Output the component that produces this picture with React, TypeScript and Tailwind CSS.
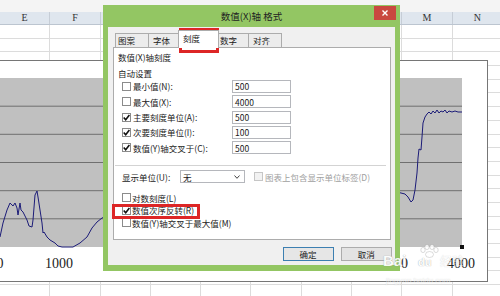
import React from "react";

const cols = ["E", "F", "", "", "", "", "", "", "M", "N"];

function Check({ checked, disabled }: { checked?: boolean; disabled?: boolean }) {
  return (
    <span
      className={`flex h-[9px] w-[9px] shrink-0 items-center justify-center border ${
        disabled ? "border-[#c6c6c6] bg-[#f2f2f2]" : "border-[#8b8b8b] bg-white"
      }`}
    >
      {checked && (
        <svg width="7" height="7" viewBox="0 0 7 7">
          <path d="M0.7 3.5 L2.7 5.7 L6.4 1.0" fill="none" stroke="#111" strokeWidth="1.6" />
        </svg>
      )}
    </span>
  );
}

const scaleRows = [
  { label: "最小值(N):", value: "500", checked: false },
  { label: "最大值(X):", value: "4000", checked: false },
  { label: "主要刻度单位(A):", value: "500", checked: true },
  { label: "次要刻度单位(I):", value: "100", checked: true },
  { label: "数值(Y)轴交叉于(C):", value: "500", checked: true },
];

const tabs = [
  { label: "图案", w: "w-[34px]", pl: "pl-[2px]" },
  { label: "字体", w: "w-[31px]", pl: "pl-[4px]" },
  { label: "刻度", w: "w-[41px]", pl: "pl-[4px]", active: true },
  { label: "数字", w: "w-[31px]", pl: "pl-[1px]" },
  { label: "对齐", w: "w-[34px]", pl: "pl-[4px]" },
];

const leftLine =
  "-12,246 -6,243 0,237 3,223 7,210 10,203 13,206 15,203 17,208 18,215 20,203 21,210 23,212 27,220 29,226 32,227 33,220 35,195 37,191 38,197 40,210 42,223 43,233 44,232 47,237 50,240 55,243 58,246 62,247 73,247 80,243 87,237 92,228 97,222 102,218 112,214";
const rightLine =
  "392,191 401,193 405,194 408,197 411,202 413,200 415,190 417,173 418,158 419,149 421,150 422,137 423,123 425,117 427,114 429,112 431,114 433,111 435,113 437,110 439,113 441,111 443,112 445,110 447,113 449,111 452,112 455,111 458,112 462,112";

export default function App() {
  const gridY = [106.2, 134.3, 162.5, 190.7, 218.8];
  return (
    <div className="relative h-[296px] w-[500px] overflow-hidden bg-white font-['Noto_Sans_CJK_SC','Noto_Sans',sans-serif]">
      {/* spreadsheet background */}
      <div className="flex flex-col">
        <div className="h-[12px] bg-[#f4f4f4]" />
        <div className="grid h-[13px] grid-cols-[repeat(10,50.3px)] border-b border-[#bcc5d0] bg-[#dfe6ee]">
          {cols.map((c, i) => (
            <div
              key={i}
              className="flex items-center justify-center border-r border-[#c6cdd6] font-['Liberation_Serif',serif] text-[10px] leading-none text-[#333]"
            >
              {c}
            </div>
          ))}
        </div>
        {Array.from({ length: 20 }).map((_, r) => (
          <div key={r} className="grid h-[13.7px] grid-cols-[repeat(10,50.3px)] border-b border-[#dcdcdc]">
            {cols.map((_, i) => (
              <div key={i} className="border-r border-[#dcdcdc]" />
            ))}
          </div>
        ))}
      </div>

      {/* chart object */}
      <div className="absolute left-[-10px] top-[60px] h-[222px] w-[498px] border border-[#767676] bg-white">
        <svg width="496" height="220" viewBox="-9 61 496 220" className="block">
          <rect x="-20" y="78" width="482" height="169" fill="#c0c0c0" />
          {gridY.map((y) => (
            <line key={y} x1="-20" x2="462" y1={y} y2={y} stroke="#6f6f6f" strokeWidth="1" />
          ))}
          <polyline points={leftLine} fill="none" stroke="#1c1c78" strokeWidth="1" />
          <polyline points={rightLine} fill="none" stroke="#1c1c78" strokeWidth="1" />
          <rect x="460" y="245" width="4" height="4" fill="#111" />
          <g fontFamily="'Liberation Serif', serif" fontSize="14" fill="#222" textAnchor="middle">
            <text x="-7" y="268">500</text>
            <text x="59" y="268">1000</text>
            <text x="394" y="268">3500</text>
            <text x="461" y="268">4000</text>
          </g>
        </svg>
      </div>

      {/* dialog window */}
      <div className="absolute left-[103px] top-[5px] flex h-[266px] w-[297px] flex-col bg-[#93c663]">
        <div className="relative h-[22px] shrink-0">
          <div className="text-center text-[9.5px] leading-[22px] text-[#222]">数值(X)轴 格式</div>
          <div className="absolute right-[4px] top-[1px] flex h-[14px] w-[22px] items-center justify-center bg-[#c9483f]">
            <svg width="6" height="6" viewBox="0 0 6 6">
              <path d="M0.5 0.5 L5.5 5.5 M5.5 0.5 L0.5 5.5" stroke="#fff" strokeWidth="1.4" />
            </svg>
          </div>
        </div>
        <div className="mx-[5px] mb-[6px] flex flex-1 flex-col bg-[#f0f0f0] pl-[5px] pr-[4px] pt-[3px] text-[8.5px] text-[#1a1a1a]">
          {/* tabs */}
          <div className="relative z-10 flex h-[17px] items-end pl-[2px]">
            {tabs.map((t, i) => (
              <div
                key={t.label}
                className={`flex items-center border border-b-0 border-[#acacac] ${t.w} ${t.pl} ${i > 0 ? "-ml-px" : ""} ${
                  t.active ? "relative z-10 -mb-px h-[18px] bg-white pb-[3px]" : "h-[14px] bg-[#ececec]"
                }`}
              >
                <span className="leading-none">{t.label}</span>
              </div>
            ))}
          </div>
          {/* panel */}
          <div className="flex h-[193px] w-[278px] flex-col border border-[#acacac] bg-white pt-[3px]">
            <div className="flex h-[12px] items-center pl-[4px] leading-none">数值(X)轴刻度</div>
            <div className="mt-[4px] flex h-[12px] items-center pl-[4px] leading-none">自动设置</div>
            {scaleRows.map((r) => (
              <div key={r.label} className="flex h-[15.3px] items-center pl-[8px]">
                <Check checked={r.checked} />
                <span className="ml-[2px] w-[99px] leading-none">{r.label}</span>
                <div className="flex h-[13px] w-[59px] items-center border border-[#b5b7bc] bg-white pl-[2px] leading-none">
                  {r.value}
                </div>
              </div>
            ))}
            <div className="ml-[1px] mt-[9.5px] h-px w-[271px] bg-[#d3d3d3]" />
            <div className="mt-[4.5px] flex h-[13px] items-center pl-[8px]">
              <span className="w-[58px] leading-none">显示单位(U):</span>
              <div className="flex h-[13px] w-[65px] items-center justify-between border border-[#b5b7bc] bg-white pl-[2px] pr-[4px] leading-none">
                <span>无</span>
                <svg width="6" height="4" viewBox="0 0 6 4">
                  <path d="M0.5 0.5 L3 3.3 L5.5 0.5" fill="none" stroke="#444" strokeWidth="1" />
                </svg>
              </div>
              <span className="ml-[9px]">
                <Check disabled />
              </span>
              <span className="ml-[2px] leading-none text-[#a0a0a0]">图表上包含显示单位标签(D)</span>
            </div>
            <div className="mt-[8.25px] flex h-[12.5px] items-center pl-[8px]">
              <Check />
              <span className="ml-[1px] leading-none">对数刻度(L)</span>
            </div>
            <div className="relative flex h-[12.5px] items-center pl-[8px]">
              <Check checked />
              <span className="ml-[1px] leading-none">数值次序反转(R)</span>
              <div className="absolute left-[-2px] top-[-0.25px] h-[15px] w-[88px] border-[3px] border-[#dd2626]" />
            </div>
            <div className="flex h-[12.5px] items-center pl-[8px]">
              <Check />
              <span className="ml-[1px] leading-none">数值(Y)轴交叉于最大值(M)</span>
            </div>
          </div>
          {/* buttons */}
          <div className="mr-[-1px] mt-[7px] flex justify-end gap-[7px]">
            <div className="flex h-[13.5px] w-[51px] items-center justify-center border border-[#3c7fb1] bg-[#e6e6e6] leading-none">
              确定
            </div>
            <div className="flex h-[13.5px] w-[51.5px] items-center justify-center border border-[#acacac] bg-[#e3e3e3] leading-none">
              取消
            </div>
          </div>
        </div>
      </div>

      {/* red highlight around the active tab */}
      <div className="pointer-events-none absolute left-[179px] top-[28px] h-[25px] w-[40px] border-[3.5px] border-[#dd2626]" />

      {/* watermark */}
      <div className="pointer-events-none absolute left-[382px] top-[244px] h-[50px] w-[100px] text-white">
        <div className="absolute left-[1px] top-[9px] font-['Liberation_Sans',sans-serif] text-[15px] font-bold leading-none opacity-90 [text-shadow:0_0_1px_#8a8a8a]">
          Bai
        </div>
        <div className="absolute left-[36px] top-[13px] font-['Liberation_Sans',sans-serif] text-[11px] font-bold leading-none opacity-90 [text-shadow:0_0_1px_#8a8a8a]">
          du
        </div>
        <svg className="absolute left-[36px] top-[0px] opacity-80" width="22" height="14" viewBox="0 0 22 14">
          <g fill="#fff" stroke="#a8a8a8" strokeWidth="0.5">
            <ellipse cx="5" cy="6" rx="2.2" ry="2.6" />
            <ellipse cx="9" cy="3" rx="2.2" ry="2.6" />
            <ellipse cx="14" cy="3" rx="2.2" ry="2.6" />
            <ellipse cx="18" cy="6" rx="2.2" ry="2.6" />
            <ellipse cx="11.5" cy="10.5" rx="4" ry="3" />
          </g>
        </svg>
        <div className="absolute left-[58px] top-[11px] text-[12px] leading-none opacity-50 [text-shadow:0_0_1px_#9a9a9a]">
          经验
        </div>
        <div className="absolute left-[4px] top-[33px] font-['Liberation_Sans',sans-serif] text-[8px] leading-none opacity-50 [text-shadow:0_0_1px_#9a9a9a]">
          jingyan.baidu.com
        </div>
      </div>
    </div>
  );
}
